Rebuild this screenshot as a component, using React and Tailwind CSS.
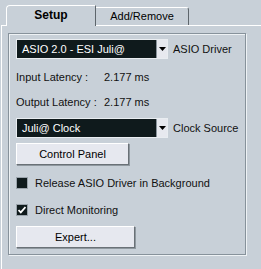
import React from 'react';

const font = { fontFamily: '"Liberation Sans", Arial, sans-serif' };

// dark combo box with the little white arrow button
const Combo = ({ value }) => (
  <div className="flex h-[20px] w-[152px] border border-[#e9edf1] bg-[#0f1a1c]">
    <div className="flex flex-1 items-center pl-[5px] text-[11px] text-white">{value}</div>
    <div className="flex w-[11px] items-center justify-center border-l border-[#8a949c] bg-[#e7e9ef]">
      <svg width="7" height="4" viewBox="0 0 7 4">
        <path d="M0 0h7L3.5 4z" fill="#000" />
      </svg>
    </div>
  </div>
);

const Button = ({ label, w }) => (
  <button
    className={`flex h-[22px] ${w} items-center justify-center border border-t-white border-l-white border-r-[#6a7177] border-b-[#6a7177] bg-[#e6e8ef] text-[11px] text-black shadow-[1px_1px_0_#8f989f]`}
  >
    {label}
  </button>
);

const Check = ({ checked, label }) => (
  <div className="flex h-[12px] items-center">
    <div className="flex h-[12px] w-[12px] items-center justify-center border border-[#9aa3ab] bg-[#0f1a1c]">
      {checked && (
        <svg width="8" height="8" viewBox="0 0 8 8">
          <path d="M0.5 4l2.3 2.4L7.5 1" stroke="#fff" strokeWidth="1.8" fill="none" />
        </svg>
      )}
    </div>
    <span className="ml-[7px] text-[11px] text-[#111]">{label}</span>
  </div>
);

export default function App() {
  return (
    <div className="h-[269px] w-[261px] overflow-hidden bg-[#c8d0d8] select-none" style={font}>
      {/* tabs */}
      <div className="flex items-end pl-[6px] pt-[5px]">
        <div className="relative z-10 -mb-px flex h-[21px] w-[90px] items-center justify-center rounded-tl-[4px] border-l border-t border-r border-l-white border-t-white border-r-[#5e666c] bg-[#c8d0d8] pb-[2px] text-[12px] font-bold text-black">
          Setup
        </div>
        <div className="flex h-[18px] w-[93px] items-center justify-center rounded-tr-[3px] border-t border-r border-t-white border-r-[#5e666c] text-[11px] text-black">
          Add/Remove
        </div>
      </div>

      {/* panel */}
      <div className="ml-px h-[260px] border-l border-t border-white">
        <div className="ml-[6px] mt-[7px] h-[222px] w-[238px] border border-[#87929b] pl-[7px] pt-[5px] shadow-[inset_1px_1px_0_#eef2f5,1px_1px_0_#eef2f5]">
          <div className="flex items-center">
            <Combo value="ASIO 2.0 - ESI Juli@" />
            <span className="ml-[5px] text-[11px] text-[#111]">ASIO Driver</span>
          </div>

          <div className="mt-[11px] flex h-[14px] items-center whitespace-nowrap text-[11px] text-[#111]">
            <span className="w-[88px]">Input Latency :</span>
            <span>2.177 ms</span>
          </div>
          <div className="mt-[11px] flex h-[14px] items-center whitespace-nowrap text-[11px] text-[#111]">
            <span className="w-[88px]">Output Latency :</span>
            <span>2.177 ms</span>
          </div>

          <div className="mt-[9px] flex items-center">
            <Combo value="Juli@ Clock" />
            <span className="ml-[5px] text-[11px] text-[#111]">Clock Source</span>
          </div>

          <div className="mt-[5px]">
            <Button label="Control Panel" w="w-[113px]" />
          </div>

          <div className="mt-[12px]">
            <Check label="Release ASIO Driver in Background" />
          </div>
          <div className="mt-[15px]">
            <Check checked label="Direct Monitoring" />
          </div>

          <div className="mt-[10px]">
            <Button label="Expert..." w="w-[119px]" />
          </div>
        </div>
      </div>
    </div>
  );
}
